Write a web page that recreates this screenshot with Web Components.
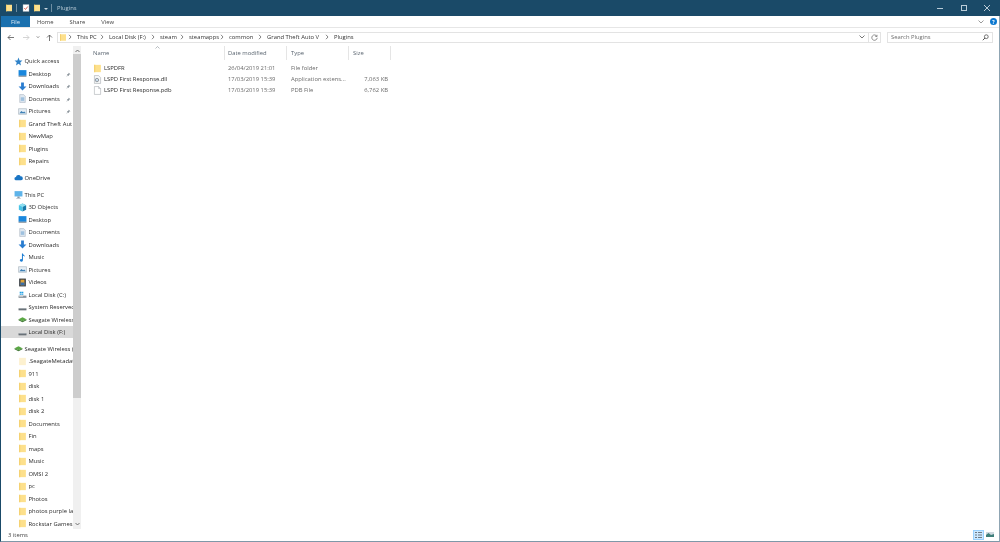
<!DOCTYPE html>
<html>
<head>
<meta charset="utf-8">
<title>Plugins</title>
<style>
    html, body { margin: 0; height: 100%; overflow: hidden; }
    body { font-family: "Open Sans", "Noto Sans", sans-serif; font-size: 5.85px; color: #2b2b2b; background: #fff; }
</style>
</head>
<body>
<explorer-window>
    <title-bar slot="title" label="Plugins"></title-bar>
    <ribbon-tabs slot="tabs"></ribbon-tabs>
    <address-row slot="address"></address-row>
    <nav-pane slot="nav">
        <nav-item icon="star" top>Quick access</nav-item>
        <nav-item icon="desktop" pin>Desktop</nav-item>
        <nav-item icon="download" pin>Downloads</nav-item>
        <nav-item icon="docs" pin>Documents</nav-item>
        <nav-item icon="pictures" pin>Pictures</nav-item>
        <nav-item icon="folder">Grand Theft Aut</nav-item>
        <nav-item icon="folder">NewMap</nav-item>
        <nav-item icon="folder">Plugins</nav-item>
        <nav-item icon="folder">Repairs</nav-item>
        <nav-item icon="cloud" top group>OneDrive</nav-item>
        <nav-item icon="pc" top group>This PC</nav-item>
        <nav-item icon="cube">3D Objects</nav-item>
        <nav-item icon="desktop">Desktop</nav-item>
        <nav-item icon="docs">Documents</nav-item>
        <nav-item icon="download">Downloads</nav-item>
        <nav-item icon="music">Music</nav-item>
        <nav-item icon="pictures">Pictures</nav-item>
        <nav-item icon="videos">Videos</nav-item>
        <nav-item icon="windisk">Local Disk (C:)</nav-item>
        <nav-item icon="disk">System Reserved</nav-item>
        <nav-item icon="seagate">Seagate Wireless</nav-item>
        <nav-item icon="disk" selected>Local Disk (F:)</nav-item>
        <nav-item icon="seagate" top group>Seagate Wireless (</nav-item>
        <nav-item icon="folderpale">.SeagateMetadat</nav-item>
        <nav-item icon="folder">911</nav-item>
        <nav-item icon="folder">disk</nav-item>
        <nav-item icon="folder">disk 1</nav-item>
        <nav-item icon="folder">disk 2</nav-item>
        <nav-item icon="folder">Documents</nav-item>
        <nav-item icon="folder">Fin</nav-item>
        <nav-item icon="folder">maps</nav-item>
        <nav-item icon="folder">Music</nav-item>
        <nav-item icon="folder">OMSI 2</nav-item>
        <nav-item icon="folder">pc</nav-item>
        <nav-item icon="folder">Photos</nav-item>
        <nav-item icon="folder">photos purple la</nav-item>
        <nav-item icon="folder">Rockstar Games</nav-item>
    </nav-pane>
    <file-list slot="files">
        <file-row icon="folder" name="LSPDFR" date="26/04/2019 21:01" type="File folder"></file-row>
        <file-row icon="dll" name="LSPD First Response.dll" date="17/03/2019 15:39" type="Application extens..." size="7,063 KB"></file-row>
        <file-row icon="file" name="LSPD First Response.pdb" date="17/03/2019 15:39" type="PDB File" size="6,762 KB"></file-row>
    </file-list>
    <status-bar slot="status"></status-bar>
</explorer-window>

<script>
const ICONS = {
    folder: '<path d="M2 1.500h12v13H2z" fill="#fde08c"/><path d="M2 1.500h2v13H2z" fill="#f4cf6e"/>',
    folderpale: '<path d="M2 1.500h12v13H2z" fill="#fdf1cf"/>',
    star: '<path d="M8 1l2 5 5 .4-3.800 3.300L12.400 15 8 12.200 3.600 15l1.200-5.300L1 6.400 6 6z" fill="#2f82c8"/>',
    desktop: '<path d="M1 2h14v10H1z" fill="#1987dd"/><path d="M1 12h14v1.500H1z" fill="#5a6a78"/>',
    download: '<path d="M5.500 1h5v7H15l-7 7-7-7h4.500z" fill="#2a7dd0"/>',
    docs: '<path d="M3 1h7l3 3v11H3z" fill="#dfe8f0" stroke="#8a98a8" stroke-width=".7"/><path d="M5 7h6M5 9h6M5 11h6" stroke="#4c8fc8"/>',
    pictures: '<path d="M1 3h14v10H1z" fill="#e6eef5" stroke="#7a8896" stroke-width=".7"/><path d="M2.500 11l3.500-4 3 2.500 2-1.500 3 3z" fill="#3d80b5"/>',
    cloud: '<path d="M4 13a3 3 0 0 1-.5-6A4.500 4.500 0 0 1 12 6a3.500 3.500 0 0 1 .5 7z" fill="#1a75c4"/>',
    pc: '<path d="M1 2h14v9.500H1z" fill="#5eb4ea"/><path d="M6 11.500h4V14H6zM4 14h8v1H4z" fill="#8a9aa8"/>',
    cube: '<path d="M8 1l6.500 3v8L8 15z" fill="#1878a8"/><path d="M8 1L1.500 4v8L8 15z" fill="#49c3e6"/><path d="M1.500 4L8 7l6.500-3L8 1z" fill="#8fe0f2"/>',
    music: '<path d="M7 1h1.800c.2 2.500 3.500 3 3.500 6-.8-1.200-2-1.800-3.500-2v8a2.800 2.300 0 1 1-1.800-2.100z" fill="#1f7fd4"/>',
    videos: '<path d="M2 1h12v14H2z" fill="#3a3f45"/><path d="M4.500 3h7v10h-7z" fill="#e0a53a"/><path d="M4.500 8h7v5h-7z" fill="#3a6ea8"/>',
    windisk: '<path d="M1 10h14v4H1z" fill="#8a949c"/><path d="M3 3h3v2.500H3zM6.500 3h3v2.500h-3zM3 6h3v2.500H3zM6.500 6h3v2.500h-3z" fill="#22a0e4"/><path d="M2 11.500h7v1H2z" fill="#e8f0f4"/>',
    disk: '<path d="M1 9.500h14V13H1z" fill="#5c646a"/><path d="M2 9.500h12V11H2z" fill="#a8b0b6"/>',
    seagate: '<path d="M8 4l7 3.500L8 11 1 7.500z" fill="#5aa843"/><path d="M1 7.500L8 11l7-3.500V9.500L8 13 1 9.500z" fill="#356f2a"/>',
    dll: '<path d="M2.500 1h7.500l3.500 3.500V15h-11z" fill="#f6f7f8" stroke="#8c939a" stroke-width=".8"/><circle cx="7" cy="9" r="3" fill="none" stroke="#67727c" stroke-width="1.200"/><circle cx="7" cy="9" r="1" fill="#5a9ad0"/>',
    file: '<path d="M2.500 1h7.500l3.500 3.500V15h-11z" fill="#fff" stroke="#8c939a" stroke-width=".8"/><path d="M10 1v3.500h3.500" fill="none" stroke="#8c939a" stroke-width=".8"/>',
    note: '<path d="M2 1h12v14H2z" fill="#fff" stroke="#9aa5ad" stroke-width=".8"/><path d="M4.500 8l2.500 3 4.500-6" fill="none" stroke="#d24a3a" stroke-width="1.600"/>',
    pin: '<path d="M9 2l5 5-1 .8-1-.4-2.500 2.400.2 2.200-1 1L6.300 10.600 3 14l-1 0 0-1 3.400-3.300L3 7.300l1-1 2.200.2L8.600 4 8.200 3z" fill="#8b949b"/>'
};

function svgIcon(name) {
    return `<svg viewBox="0 0 16 16" width="100%" height="100%" xmlns="http://www.w3.org/2000/svg">${ICONS[name] || ''}</svg>`;
}

class ExplorerWindow extends HTMLElement {
    constructor() {
        super();
        const shadow = this.attachShadow({ mode: 'open' });
        shadow.innerHTML = `
            <style>
                :host {
                    display: flex;
                    flex-direction: column;
                    box-sizing: border-box;
                    width: 1000px;
                    height: 542px;
                    border: 1px solid #1a4a68;
                    border-top: 0;
                    border-right-color: #8fa5b3;
                    border-bottom-color: #7f98a8;
                    background: #fff;
                    filter: blur(.3px);
                }
                .body { flex: 1; display: flex; min-height: 0; }
                ::slotted(file-list) { flex: 1; }
            </style>
            <slot name="title"></slot>
            <slot name="tabs"></slot>
            <slot name="address"></slot>
            <div class="body">
                <slot name="nav"></slot>
                <slot name="files"></slot>
            </div>
            <slot name="status"></slot>
        `;
    }
}

class TitleBar extends HTMLElement {
    constructor() {
        super();
        const shadow = this.attachShadow({ mode: 'open' });
        shadow.innerHTML = `
            <style>
                :host {
                    display: flex;
                    align-items: center;
                    height: 16px;
                    margin: 0 -1px 0 -1px;
                    background: #1a4a68;
                    color: #b9cbd7;
                    padding-left: 5px;
                    flex: none;
                }
                .ic { width: 8px; height: 10px; flex: none; }
                .sep { width: 1px; height: 8px; background: #6f8ea2; flex: none; }
                .arrow { width: 0; height: 0; border: 2px solid transparent; border-top: 2.500px solid #c8d6df; margin: 3px 3px 0 3px; flex: none; }
                .label { margin-left: 4px; flex: 1; }
                .ctl { display: flex; align-items: center; gap: 16px; padding-right: 9px; color: #b9cbd7; }
                .min { width: 6px; height: 1px; background: #b9cbd7; margin-right: 2px; }
                .max { width: 6px; height: 6px; box-sizing: border-box; border: 1px solid #b9cbd7; }
                .close { width: 8px; height: 8px; }
            </style>
            <span class="ic">${svgIcon('folder')}</span>
            <span class="sep" style="margin:0 5px 0 3px"></span>
            <span class="ic" style="margin-right:3px">${svgIcon('note')}</span>
            <span class="ic">${svgIcon('folder')}</span>
            <span class="arrow"></span>
            <span class="sep" style="margin-right:1px"></span>
            <span class="label">${this.getAttribute('label')}</span>
            <span class="ctl">
                <span class="min"></span>
                <span class="max"></span>
                <svg class="close" viewBox="0 0 8 8"><path d="M1 1l6 6M7 1l-6 6" stroke="#b9cbd7" stroke-width="1"/></svg>
            </span>
        `;
    }
}

class RibbonTabs extends HTMLElement {
    constructor() {
        super();
        const shadow = this.attachShadow({ mode: 'open' });
        shadow.innerHTML = `
            <style>
                :host {
                    display: flex;
                    align-items: center;
                    height: 11px;
                    flex: none;
                    background: #fff;
                    border-bottom: 1px solid #e6e6e6;
                    color: #444;
                }
                .file { width: 29px; height: 100%; background: #1a70ae; color: #dbe9f3; display: flex; align-items: center; justify-content: center; }
                .tab { margin-right: 16px; }
                .right { margin-left: auto; display: flex; align-items: center; gap: 6px; padding-right: 2px; }
                .help { width: 7px; height: 7px; border-radius: 50%; background: #0b78d0; color: #fff; font-size: 5px; font-weight: 700; display: flex; align-items: center; justify-content: center; }
            </style>
            <span class="file">File</span>
            <span class="tab" style="margin-left:7px">Home</span>
            <span class="tab">Share</span>
            <span class="tab">View</span>
            <span class="right">
                <svg width="6" height="4" viewBox="0 0 6 4"><path d="M.5.500L3 3 5.500.500" fill="none" stroke="#9a9a9a"/></svg>
                <span class="help">?</span>
            </span>
        `;
    }
}

class AddressRow extends HTMLElement {
    constructor() {
        super();
        const shadow = this.attachShadow({ mode: 'open' });
        const parts = [
            ['This PC', 23], ['Local Disk (F:)', 42], ['steam', 20], ['steamapps', 31],
            ['common', 29], ['Grand Theft Auto V', 58], ['Plugins', 22]
        ];
        const crumbs = parts.map(([text, w]) => `
            <svg class="chev" viewBox="0 0 4 6"><path d="M1 .8L3 3 1 5.200" fill="none" stroke="#666" stroke-width=".8"/></svg>
            <span class="crumb" style="width:${w}px">${text}</span>`).join('');
        shadow.innerHTML = `
            <style>
                :host {
                    display: flex;
                    align-items: center;
                    height: 18px;
                    flex: none;
                    color: #333;
                    position: relative;
                }
                svg.nav { width: 7px; height: 7px; flex: none; }
                .box { display: flex; align-items: center; height: 11px; box-sizing: border-box; border: 1px solid #e3e3e3; flex: none; }
                .path { margin-left: 4px; width: 812px; padding-left: 1px; }
                .folder { width: 8px; height: 9px; flex: none; margin-right: 1px; }
                .chev { width: 4px; height: 6px; flex: none; margin-right: 5px; }
                .crumb { flex: none; white-space: nowrap; }
                .end { margin-left: auto; width: 6px; height: 4px; margin-right: 3px; }
                .refresh { width: 13px; justify-content: center; margin-left: -1px; }
                .search { margin-left: 6px; width: 106px; padding: 0 3px 0 3px; justify-content: space-between; color: #6d6d6d; }
            </style>
            <svg class="nav" style="margin-left:6px" viewBox="0 0 7 7"><path d="M7 3.500H1M3.500 1L1 3.500 3.500 6" fill="none" stroke="#555" stroke-width=".8"/></svg>
            <svg class="nav" style="margin-left:9px" viewBox="0 0 7 7"><path d="M0 3.500h6M3.500 1L6 3.500 3.500 6" fill="none" stroke="#c9c9c9" stroke-width=".8"/></svg>
            <svg class="nav" style="margin-left:6px;width:4px;height:4px" viewBox="0 0 4 4"><path d="M.5 1L2 3l1.500-2" fill="none" stroke="#888" stroke-width=".6"/></svg>
            <svg class="nav" style="margin-left:6px" viewBox="0 0 7 7"><path d="M3.500 7V1M1 3.500L3.500 1 6 3.500" fill="none" stroke="#555" stroke-width=".8"/></svg>
            <div class="box path">
                <span class="folder">${svgIcon('folder')}</span>
                ${crumbs}
                <svg class="end" viewBox="0 0 6 4"><path d="M.5.500L3 3 5.500.500" fill="none" stroke="#555" stroke-width=".8"/></svg>
            </div>
            <div class="box refresh">
                <svg width="7" height="7" viewBox="0 0 7 7"><path d="M5.800 2.200A2.700 2.700 0 1 0 6.200 3.800M6 .8v1.700H4.300" fill="none" stroke="#666" stroke-width=".7"/></svg>
            </div>
            <div class="box search">
                <span>Search Plugins</span>
                <svg width="7" height="7" viewBox="0 0 7 7"><circle cx="4.300" cy="2.700" r="1.900" fill="none" stroke="#555" stroke-width=".8"/><path d="M3 4L.8 6.200" stroke="#555" stroke-width="1"/></svg>
            </div>
        `;
    }
}

class NavPane extends HTMLElement {
    constructor() {
        super();
        const shadow = this.attachShadow({ mode: 'open' });
        shadow.innerHTML = `
            <style>
                :host { display: flex; width: 81px; flex: none; min-height: 0; overflow: hidden; }
                .list { width: 72px; flex: none; padding-top: 8.800px; overflow: hidden; }
                .bar { width: 8px; flex: none; background: #f0f0f0; display: flex; flex-direction: column; align-items: center; position: relative; }
                .thumb { position: absolute; left: 0; right: 0; top: 8px; height: 344px; background: #cdcdcd; }
                .up, .down { position: absolute; left: 1.500px; width: 5px; height: 4px; }
                .up { top: 3px; }
                .down { bottom: 3px; }
            </style>
            <div class="list"><slot></slot></div>
            <div class="bar">
                <svg class="up" viewBox="0 0 5 4"><path d="M.5 3L2.500 1l2 2" fill="none" stroke="#555" stroke-width=".8"/></svg>
                <div class="thumb"></div>
                <svg class="down" viewBox="0 0 5 4"><path d="M.5 1l2 2 2-2" fill="none" stroke="#555" stroke-width=".8"/></svg>
            </div>
        `;
    }
}

class NavItem extends HTMLElement {
    constructor() {
        super();
        const shadow = this.attachShadow({ mode: 'open' });
        shadow.innerHTML = `
            <style>
                :host {
                    display: flex;
                    align-items: center;
                    height: 12.500px;
                    padding-left: 17px;
                    white-space: nowrap;
                    overflow: hidden;
                    position: relative;
                    color: #2b2b2b;
                }
                :host([top]) { padding-left: 13px; }
                :host([group]) { margin-top: 4.300px; }
                :host([selected]) { background: #d9d9d9; }
                .ic { width: 9px; height: 9px; flex: none; margin-right: 1.500px; }
                .pin { position: absolute; left: 65px; top: 3.500px; width: 5px; height: 5px; background: #fff; }
            </style>
            <span class="ic">${svgIcon(this.getAttribute('icon'))}</span>
            <slot></slot>
            ${this.hasAttribute('pin') ? `<span class="pin">${svgIcon('pin')}</span>` : ''}
        `;
    }
}

class FileList extends HTMLElement {
    constructor() {
        super();
        const shadow = this.attachShadow({ mode: 'open' });
        shadow.innerHTML = `
            <style>
                :host { display: block; min-width: 0; position: relative; }
                .head { display: grid; grid-template-columns: 132px 62px 62px 42px; height: 14px; padding-left: 11px; color: #5a6570; align-items: center; margin-bottom: 2.500px; }
                .head span { height: 100%; display: flex; align-items: center; box-sizing: border-box; border-right: 1px solid #e5e5e5; padding-left: 4px; }
                .head span:first-child { padding-left: 0; }
                .head span:nth-child(2) { padding-left: 3px; }
                .sort { position: absolute; left: 73px; top: 0; width: 5px; height: 3px; }
            </style>
            <div class="head">
                <span>Name</span><span>Date modified</span><span>Type</span><span>Size</span>
            </div>
            <svg class="sort" viewBox="0 0 5 3"><path d="M.5 2.500L2.500.5l2 2" fill="none" stroke="#9aa0a6" stroke-width=".7"/></svg>
            <slot></slot>
        `;
    }
}

class FileRow extends HTMLElement {
    constructor() {
        super();
        const shadow = this.attachShadow({ mode: 'open' });
        shadow.innerHTML = `
            <style>
                :host { display: grid; grid-template-columns: 132px 62px 62px 39px; height: 11px; padding-left: 11px; align-items: center; color: #6a6a6a; white-space: nowrap; }
                .name { display: flex; align-items: center; color: #2b2b2b; }
                .ic { width: 9px; height: 9px; margin-right: 2px; flex: none; }
                .date { padding-left: 3px; }
                .type { padding-left: 4px; }
                .size { text-align: right; }
            </style>
            <span class="name"><span class="ic">${svgIcon(this.getAttribute('icon'))}</span>${this.getAttribute('name')}</span>
            <span class="date">${this.getAttribute('date')}</span>
            <span class="type">${this.getAttribute('type')}</span>
            <span class="size">${this.getAttribute('size') || ''}</span>
        `;
    }
}

class StatusBar extends HTMLElement {
    constructor() {
        super();
        const shadow = this.attachShadow({ mode: 'open' });
        shadow.innerHTML = `
            <style>
                :host { display: flex; align-items: center; height: 12px; flex: none; padding-left: 7px; color: #444; background: #fff; }
                .views { margin-left: auto; display: flex; align-items: center; gap: 1px; padding-right: 3px; }
                .btn { width: 11px; height: 10px; box-sizing: border-box; }
                .on { background: #cce8ff; border: 1px solid #99d1ff; }
            </style>
            <span>3 items</span>
            <div class="views">
                <div class="btn on"><svg width="9" height="8" viewBox="0 0 9 8"><path d="M1 1.500h2M4 1.500h4M1 4h2M4 4h4M1 6.500h2M4 6.500h4" stroke="#6d7a86"/></svg></div>
                <div class="btn"><svg width="10" height="9" viewBox="0 0 10 9"><path d="M1 2h8v5H1z" fill="#cfd8df"/><path d="M1 5l2.500-2L6 5l3-1v3H1z" fill="#3f7f7a"/></svg></div>
            </div>
        `;
    }
}

customElements.define('explorer-window', ExplorerWindow);
customElements.define('title-bar', TitleBar);
customElements.define('ribbon-tabs', RibbonTabs);
customElements.define('address-row', AddressRow);
customElements.define('nav-pane', NavPane);
customElements.define('nav-item', NavItem);
customElements.define('file-list', FileList);
customElements.define('file-row', FileRow);
customElements.define('status-bar', StatusBar);
</script>
</body>
</html>
